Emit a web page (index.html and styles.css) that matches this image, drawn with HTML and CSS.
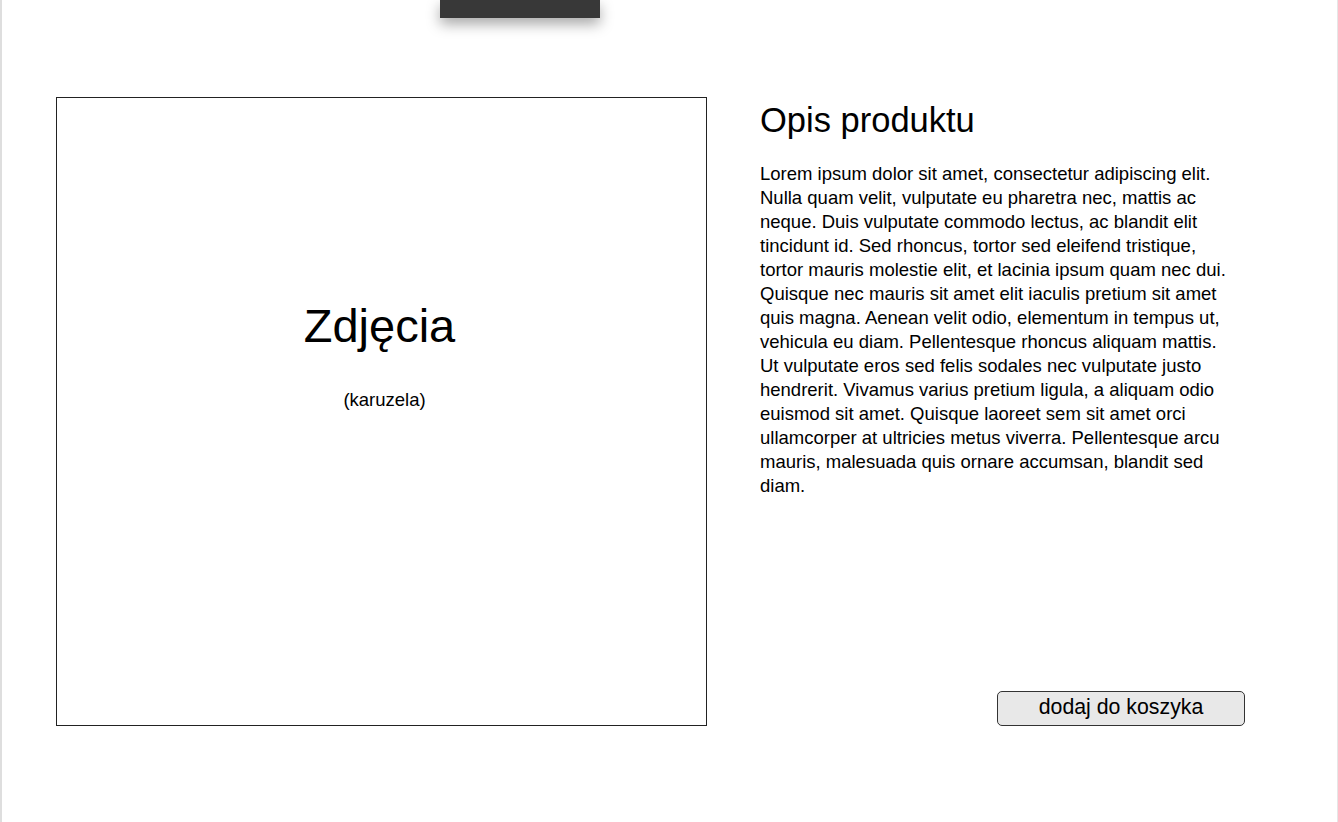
FILE: index.html
```html
<!DOCTYPE html>
<html lang="pl">
<head>
<meta charset="utf-8">
<title>Produkt</title>
<link rel="stylesheet" href="styles.css">
</head>
<body>
<div class="page">
  <header class="topbar"></header>
  <main class="product">
    <section class="gallery">
      <h2 class="gallery-title">Zdjęcia</h2>
      <p class="gallery-note">(karuzela)</p>
    </section>
    <section class="details">
      <h1 class="details-title">Opis produktu</h1>
      <p class="details-text">Lorem ipsum dolor sit amet, consectetur adipiscing elit. Nulla quam velit, vulputate eu pharetra nec, mattis ac neque. Duis vulputate commodo lectus, ac blandit elit tincidunt id. Sed rhoncus, tortor sed eleifend tristique, tortor mauris molestie elit, et lacinia ipsum quam nec dui. Quisque nec mauris sit amet elit iaculis pretium sit amet quis magna. Aenean velit odio, elementum in tempus ut, vehicula eu diam. Pellentesque rhoncus aliquam mattis. Ut vulputate eros sed felis sodales nec vulputate justo hendrerit. Vivamus varius pretium ligula, a aliquam odio euismod sit amet. Quisque laoreet sem sit amet orci ullamcorper at ultricies metus viverra. Pellentesque arcu mauris, malesuada quis ornare accumsan, blandit sed diam.</p>
      <button class="add-to-cart" type="button">dodaj do koszyka</button>
    </section>
  </main>
</div>
</body>
</html>
```

FILE: styles.css
```css
html, body {
  margin: 0;
  padding: 0;
  background: #ffffff;
}

body {
  font-family: "Liberation Sans", Arial, Helvetica, sans-serif;
  color: #000;
}

.page {
  box-sizing: border-box;
  width: 1338px;
  min-height: 822px;
  border-left: 2px solid #dedede;
  border-right: 1px solid #e6e6e6;
}

.topbar {
  width: 160px;
  height: 18px;
  margin-left: 438px;
  background: #383838;
  box-shadow: 0 6px 14px rgba(0, 0, 0, 0.35);
}

.product {
  display: flex;
  align-items: stretch;
  gap: 53px;
  padding-left: 54px;
  margin-top: 79px;
}

.gallery {
  box-sizing: border-box;
  width: 651px;
  height: 629px;
  border: 1px solid #222;
  display: flex;
  flex-direction: column;
  align-items: center;
  padding-top: 200px;
}

.gallery-title {
  margin: 0 4px 0 0;
  font-size: 47px;
  font-weight: normal;
  line-height: 56px;
}

.gallery-note {
  margin: 34px 0 0 6px;
  font-size: 18.5px;
  line-height: 24px;
}

.details {
  width: 485px;
  display: flex;
  flex-direction: column;
}

.details-title {
  margin: 3px 0 0;
  font-size: 34.5px;
  font-weight: normal;
  line-height: 40px;
}

.details-text {
  margin: 22px 0 0;
  font-size: 18.5px;
  line-height: 24px;
  padding-right: 10px;
}

.add-to-cart {
  margin-top: auto;
  align-self: flex-end;
  box-sizing: border-box;
  width: 248px;
  height: 35px;
  padding: 0 0 3px;
  border: 1px solid #333;
  border-radius: 5px;
  background: #e8e8e8;
  font-family: "Liberation Sans", Arial, Helvetica, sans-serif;
  font-size: 21.3px;
  color: #000;
  cursor: pointer;
}
```
